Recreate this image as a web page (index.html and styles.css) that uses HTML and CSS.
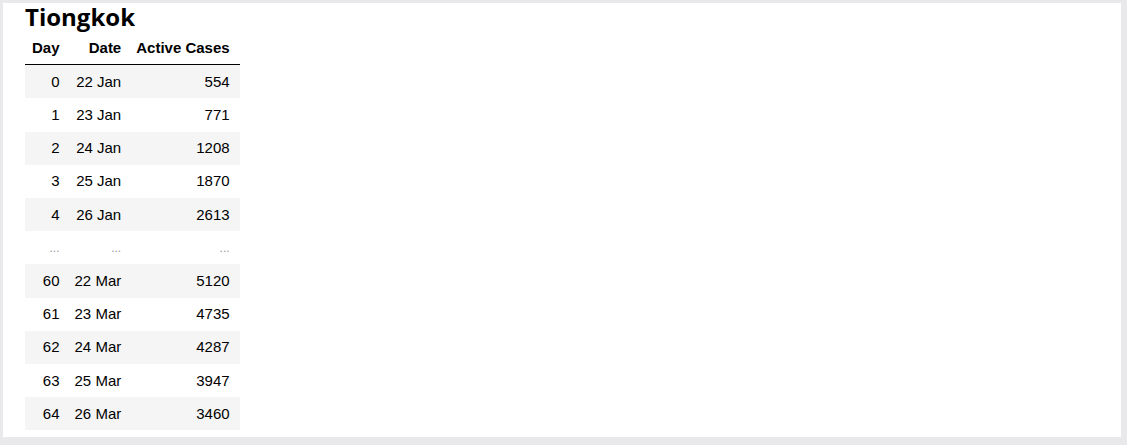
FILE: index.html
```html
<!DOCTYPE html>
<html lang="en">
<head>
    <meta charset="UTF-8">
    <meta name="viewport" content="width=device-width, initial-scale=1.0">
    <title>Tiongkok</title>
    <link rel="stylesheet" href="styles.css">
</head>
<body>
    <div class="panel">
        <h2 class="title">Tiongkok</h2>
        <table class="dataframe">
            <thead>
                <tr>
                    <th>Day</th>
                    <th>Date</th>
                    <th>Active Cases</th>
                </tr>
            </thead>
            <tbody>
                <tr><td>0</td><td>22 Jan</td><td>554</td></tr>
                <tr><td>1</td><td>23 Jan</td><td>771</td></tr>
                <tr><td>2</td><td>24 Jan</td><td>1208</td></tr>
                <tr><td>3</td><td>25 Jan</td><td>1870</td></tr>
                <tr><td>4</td><td>26 Jan</td><td>2613</td></tr>
                <tr class="gap"><td>...</td><td>...</td><td>...</td></tr>
                <tr><td>60</td><td>22 Mar</td><td>5120</td></tr>
                <tr><td>61</td><td>23 Mar</td><td>4735</td></tr>
                <tr><td>62</td><td>24 Mar</td><td>4287</td></tr>
                <tr><td>63</td><td>25 Mar</td><td>3947</td></tr>
                <tr><td>64</td><td>26 Mar</td><td>3460</td></tr>
            </tbody>
        </table>
    </div>
</body>
</html>
```

FILE: styles.css
```css
body {
    margin: 0;
    background-color: #e9e9ec;
    font-family: "Liberation Sans", Arial, sans-serif;
    color: #000;
}
.panel {
    margin: 3px 6px 0 3px;
    height: 434px;
    box-sizing: border-box;
    padding: 0 22px;
    background-color: #fff;
}
.title {
    margin: 0;
    font-family: "Open Sans", sans-serif;
    font-weight: 700;
    font-size: 24px;
    line-height: 28px;
    height: 28px;
}
.dataframe {
    border-collapse: collapse;
    border-spacing: 0;
    font-size: 15px;
}
.dataframe th,
.dataframe td {
    text-align: right;
    padding: 7.5px 7.5px;
    line-height: 18.2px;
    white-space: nowrap;
}
.dataframe th:first-child,
.dataframe td:first-child {
    padding-left: 7px;
}
.dataframe th:last-child,
.dataframe td:last-child {
    padding-right: 10.5px;
}
.dataframe thead th {
    font-weight: 700;
    border-bottom: 1px solid #000;
}
.dataframe tbody tr:nth-child(odd) {
    background-color: #f5f5f5;
}
.dataframe tbody tr.gap td {
    color: #999;
    font-size: 12px;
}
```
